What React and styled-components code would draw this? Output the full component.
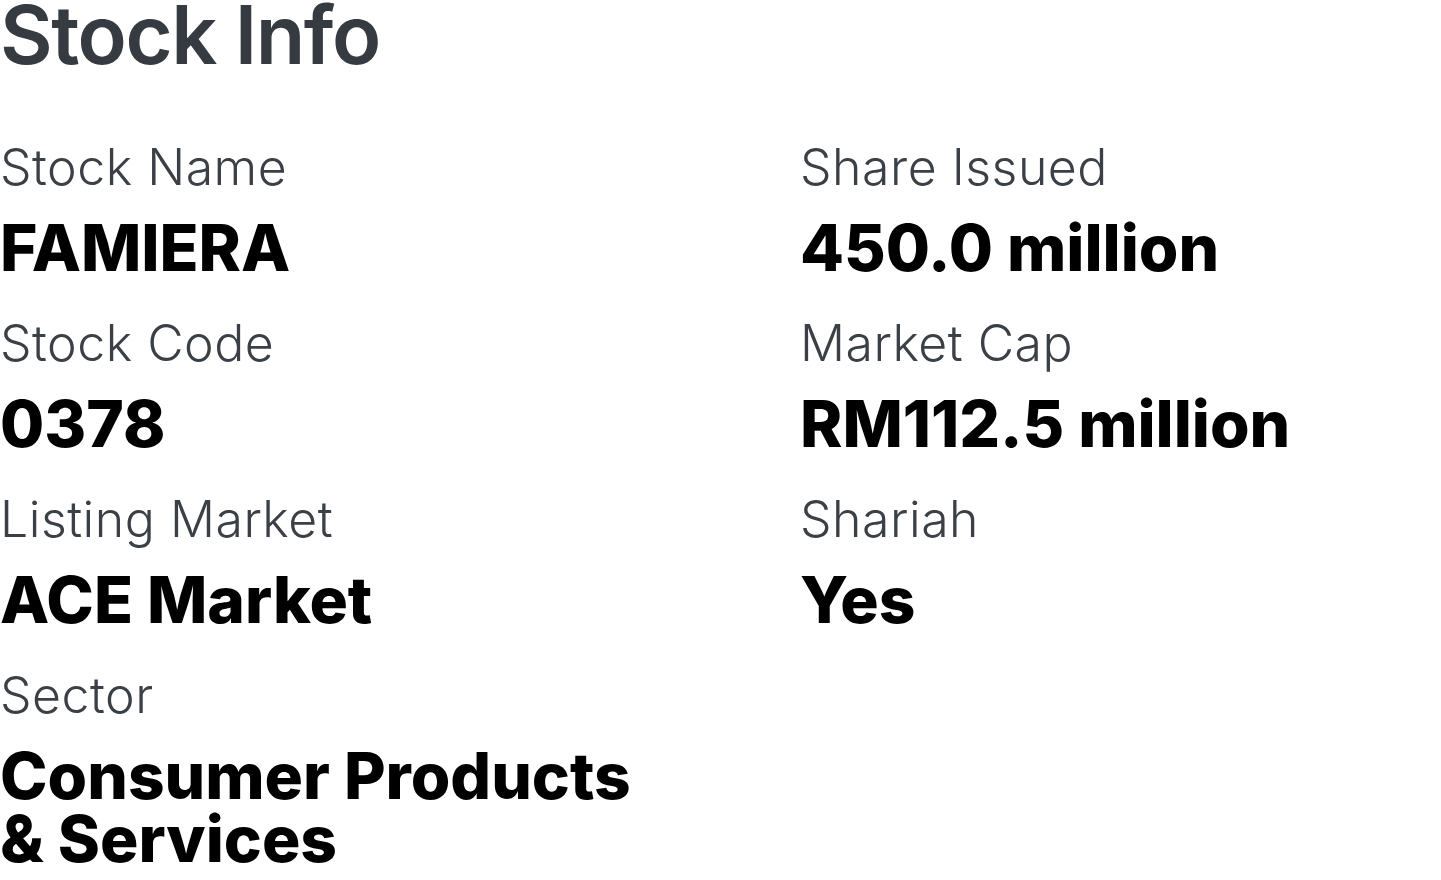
import React from "react";
import styled, { createGlobalStyle } from "styled-components";

const GlobalStyle = createGlobalStyle`
  html, body {
    margin: 0;
    padding: 0;
    background: #ffffff;
  }
  body {
    font-family: "Inter", "Liberation Sans", sans-serif;
  }
`;

const stockInfo = [
  { label: "Stock Name", value: "FAMIERA" },
  { label: "Share Issued", value: "450.0 million" },
  { label: "Stock Code", value: "0378" },
  { label: "Market Cap", value: "RM112.5 million" },
  { label: "Listing Market", value: "ACE Market" },
  { label: "Shariah", value: "Yes" },
  { label: "Sector", value: ["Consumer Products", "& Services"] },
];

function App() {
  return (
    <>
      <GlobalStyle />
      <Wrapper>
        <Title>Stock Info</Title>
        <InfoGrid>
          {stockInfo.map((item) => (
            <InfoItem key={item.label}>
              <Label>{item.label}</Label>
              <Value>
                {Array.isArray(item.value)
                  ? item.value.map((line, i) => (
                      <React.Fragment key={line}>
                        {i > 0 && <br />}
                        {line}
                      </React.Fragment>
                    ))
                  : item.value}
              </Value>
            </InfoItem>
          ))}
        </InfoGrid>
      </Wrapper>
    </>
  );
}

const Wrapper = styled.div`
  width: 1441px;
  height: 880px;
  overflow: hidden;
`;

const Title = styled.h1`
  margin: -5px 0 0 0;
  font-family: "Inter", sans-serif;
  font-size: 81px;
  font-weight: 600;
  line-height: 1;
  letter-spacing: -0.018em;
  color: #363a41;
`;

const InfoGrid = styled.div`
  display: grid;
  grid-template-columns: 800px 1fr;
  row-gap: 34px;
  margin-top: 61px;
`;

const InfoItem = styled.div`
  display: flex;
  flex-direction: column;
`;

const Label = styled.div`
  font-family: "Inter", sans-serif;
  font-size: 50px;
  font-weight: 300;
  line-height: 60px;
  letter-spacing: 0.01em;
  color: #3b3f46;
`;

const Value = styled.div`
  font-family: "Inter", sans-serif;
  font-size: 64px;
  font-weight: 800;
  line-height: 63px;
  color: #000000;
  margin-top: 19px;
`;

export default App;
